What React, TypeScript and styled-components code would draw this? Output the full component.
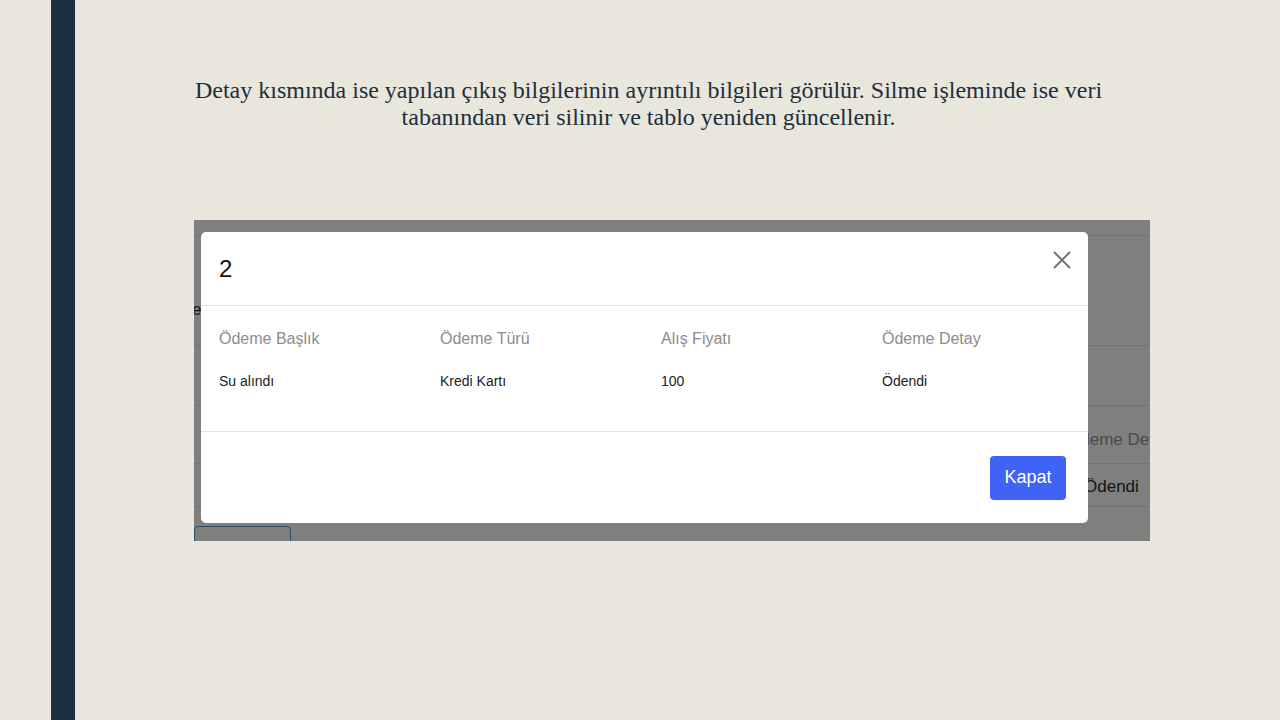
import React from "react";
import styled, { createGlobalStyle } from "styled-components";

const Global = createGlobalStyle`
  html, body { margin: 0; padding: 0; }
  body {
    background: #e9e6dc;
    width: 1280px;
    height: 720px;
    overflow: hidden;
  }
`;

const Slide = styled.div`
  display: flex;
  width: 1280px;
  height: 720px;
  background: #e9e6dc;
`;

const Gutter = styled.div`
  width: 51px;
  flex: none;
`;

const SideBar = styled.div`
  width: 24px;
  flex: none;
  background: #1b2f3f;
`;

const Main = styled.div`
  flex: 1;
  display: flex;
  flex-direction: column;
`;

const Caption = styled.p`
  margin: 77px 0 0 73px;
  width: 1001px;
  text-align: center;
  font-family: "Liberation Serif", "Times New Roman", serif;
  font-size: 24px;
  line-height: 27px;
  color: #1c2f3d;
`;

const Shot = styled.div`
  position: relative;
  margin: 89px 0 0 119px;
  width: 956px;
  height: 321px;
  overflow: hidden;
  background: #ffffff;
  font-family: "Liberation Sans", Arial, sans-serif;
`;

const UnderRow = styled.div<{ $h: number }>`
  height: ${(p) => p.$h}px;
  border-bottom: 1px solid #e6e6e6;
  display: flex;
  align-items: center;
  box-sizing: content-box;
`;

const EdgeText = styled.span`
  font-size: 17px;
  color: #222;
  margin: 0 0 0 -2px;
  padding-top: 38px;
`;

const UnderCell = styled.span<{ $x: number; $c: string; $dy: number }>`
  margin-left: ${(p) => p.$x}px;
  padding-top: ${(p) => p.$dy}px;
  font-size: 17px;
  color: ${(p) => p.$c};
  white-space: nowrap;
`;

const OutlineBtn = styled.div`
  margin-top: 19px;
  width: 95px;
  height: 30px;
  border: 1px solid #5694dc;
  border-radius: 4px;
`;

const Backdrop = styled.div`
  position: absolute;
  inset: 0;
  background: rgba(0, 0, 0, 0.5);
  padding: 12px 0 0 7px;
`;

const Modal = styled.div`
  width: 887px;
  height: 291px;
  background: #ffffff;
  border-radius: 5px;
  display: flex;
  flex-direction: column;
`;

const Header = styled.div`
  height: 73px;
  flex: none;
  border-bottom: 1px solid #e2e2e2;
  display: flex;
  align-items: flex-start;
  justify-content: space-between;
  padding: 0 16px 0 18px;
`;

const Title = styled.div`
  font-size: 24px;
  color: #111;
  margin-top: 23px;
`;

const Close = styled.div`
  margin-top: 18px;
  width: 20px;
  height: 20px;
`;

const Body = styled.div`
  flex: none;
  height: 126px;
  border-bottom: 1px solid #e2e2e2;
  display: grid;
  grid-template-columns: repeat(4, 221px);
  grid-template-rows: 42px 42px;
  align-content: start;
  padding: 12px 0 0 18px;
  box-sizing: border-box;
`;

const Label = styled.div`
  font-size: 16px;
  color: #8c8c8c;
  align-self: center;
`;

const Value = styled.div`
  font-size: 14px;
  color: #222;
  align-self: center;
`;

const Footer = styled.div`
  flex: 1;
  display: flex;
  align-items: center;
  justify-content: flex-end;
  padding-right: 22px;
`;

const Button = styled.button`
  width: 76px;
  height: 44px;
  border: none;
  border-radius: 4px;
  background: #3f63f5;
  color: #ffffff;
  font-family: "Liberation Sans", Arial, sans-serif;
  font-size: 18px;
  padding: 0;
`;

const cols = [
  ["Ödeme Başlık", "Su alındı"],
  ["Ödeme Türü", "Kredi Kartı"],
  ["Alış Fiyatı", "100"],
  ["Ödeme Detay", "Ödendi"],
];

export default function App() {
  return (
    <>
      <Global />
      <Slide>
        <Gutter />
        <SideBar />
        <Main>
          <Caption>
            Detay kısmında ise yapılan çıkış bilgilerinin ayrıntılı bilgileri görülür. Silme işleminde ise veri
            <br />
            tabanından veri silinir ve tablo yeniden güncellenir.
          </Caption>
          <Shot>
            <UnderRow $h={15} />
            <UnderRow $h={109}>
              <EdgeText>e</EdgeText>
            </UnderRow>
            <UnderRow $h={59} />
            <UnderRow $h={57}>
              <UnderCell $x={873} $c="#949494" $dy={10}>Ödeme Detay</UnderCell>
            </UnderRow>
            <UnderRow $h={42}>
              <UnderCell $x={890} $c="#2a2a2a" $dy={3}>Ödendi</UnderCell>
            </UnderRow>
            <OutlineBtn />
            <Backdrop>
              <Modal>
                <Header>
                  <Title>2</Title>
                  <Close>
                    <svg width="20" height="20" viewBox="0 0 20 20">
                      <path d="M2 2 L18 18 M18 2 L2 18" stroke="#767676" strokeWidth="2" />
                    </svg>
                  </Close>
                </Header>
                <Body>
                  {cols.map(([l]) => (
                    <Label key={l}>{l}</Label>
                  ))}
                  {cols.map(([l, v]) => (
                    <Value key={l + v}>{v}</Value>
                  ))}
                </Body>
                <Footer>
                  <Button>Kapat</Button>
                </Footer>
              </Modal>
            </Backdrop>
          </Shot>
        </Main>
      </Slide>
    </>
  );
}
